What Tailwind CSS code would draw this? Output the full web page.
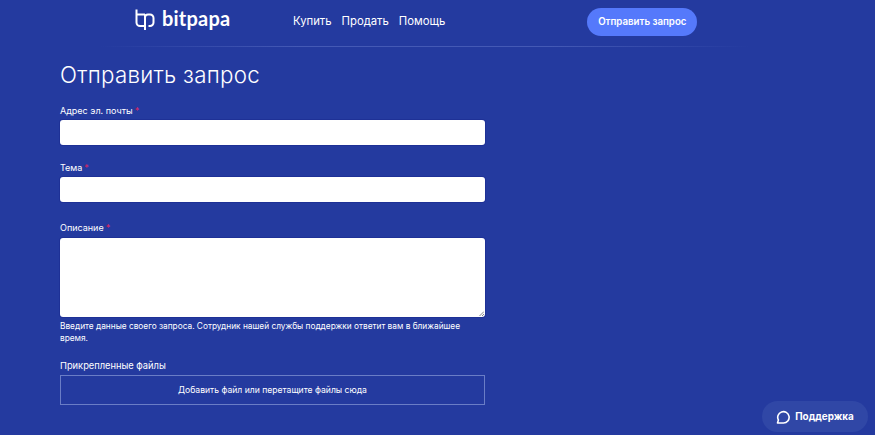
<!DOCTYPE html>
<html lang="ru">
<head>
    <meta charset="UTF-8">
    <meta name="viewport" content="width=device-width, initial-scale=1.0">
    <title>Отправить запрос</title>
    <script src="https://cdn.jsdelivr.net/npm/@tailwindcss/browser@4"></script>
</head>
<body class="bg-[#243a9f] h-[435px] overflow-hidden relative font-['Inter','Noto_Sans',sans-serif] text-white">

    <!-- шапка -->
    <header class="h-[47px] flex pl-[135px] bg-no-repeat bg-[linear-gradient(90deg,#243a9f_100px,#4459b5_300px,#4459b5_550px,#243a9f_750px)] bg-[length:100%_1px] bg-bottom">
        <a class="flex items-center gap-[7px] h-[39px] w-[158px]">
            <svg width="20" height="21" viewBox="0 0 20 21" fill="none" stroke="white" stroke-width="2">
                <path d="M1.500 0.500V13.500a3.500 3.500 0 0 0 3.500 3.500H10V5.500M1.500 5.500H10"/>
                <path d="M10 21V8.500a3 3 0 0 1 3-3h2a3.500 3.500 0 0 1 3.500 3.500V13.500a3.500 3.500 0 0 1-3.500 3.500H13.500"/>
            </svg>
            <span class="font-['Lato',sans-serif] text-[20px] font-bold leading-none tracking-[0.2px] mb-[3px]">bitpapa</span>
        </a>
        <nav class="flex items-center gap-[10px] h-[43px] text-[11.300px]">
            <a>Купить</a>
            <a>Продать</a>
            <a>Помощь</a>
        </nav>
        <button class="ml-[142px] mt-[8px] w-[110px] h-[28px] rounded-full bg-[#5579fb] text-[9.700px] font-semibold">Отправить запрос</button>
    </header>

    <!-- форма -->
    <main class="pl-[60px] w-[485px] box-content">
        <h1 class="text-[22.300px] font-light leading-[28px] mt-[14px] tracking-[0.3px]">Отправить запрос</h1>

        <label class="block text-[9px] leading-[12px] mt-[16px]">Адрес эл. почты<span class="text-[#e0245e] ml-[2px]">*</span></label>
        <input type="text" class="block w-[425px] h-[25px] mt-[3px] rounded-[3px] bg-white shadow-[0_0_0_1px_#1e3196]">

        <label class="block text-[9px] leading-[12px] mt-[17px]">Тема<span class="text-[#e0245e] ml-[2px]">*</span></label>
        <input type="text" class="block w-[425px] h-[25px] mt-[3px] rounded-[3px] bg-white shadow-[0_0_0_1px_#1e3196]">

        <label class="block text-[9px] leading-[12px] mt-[20px]">Описание<span class="text-[#e0245e] ml-[2px]">*</span></label>
        <div class="relative w-[425px] h-[79px] mt-[4px]">
            <textarea class="block w-full h-full rounded-[3px] bg-white resize-none shadow-[0_0_0_1px_#1e3196]"></textarea>
            <svg class="absolute right-[1px] bottom-[1px]" width="5" height="5" viewBox="0 0 5 5" stroke="#8a8a8a" stroke-width="1">
                <path d="M0.500 5L5 0.500M3 5l2-2"/>
            </svg>
        </div>
        <p class="text-[8.300px] leading-[12px] mt-[3px] w-[425px]">Введите данные своего запроса. Сотрудник нашей службы поддержки ответит вам в ближайшее время.</p>

        <label class="block text-[9.300px] leading-[12px] mt-[16px]">Прикрепленные файлы</label>
        <div class="w-[425px] h-[30px] mt-[3px] border border-[#6a7dc6] flex items-center justify-center text-[8.600px]">Добавить файл или перетащите файлы сюда</div>
    </main>

    <!-- кнопка поддержки -->
    <button class="absolute right-[7px] bottom-[3px] w-[106px] h-[31px] rounded-full bg-[#3047a6] flex items-center justify-center gap-[5px] text-[9.900px] font-bold">
        <svg width="14" height="14" viewBox="0 0 14 14" fill="none" stroke="white" stroke-width="1.600">
            <path d="M1.500 13l.9-3A5.700 5.700 0 1 1 7.500 13H1.500z" stroke-linejoin="round"/>
        </svg>
        Поддержка
    </button>

</body>
</html>
